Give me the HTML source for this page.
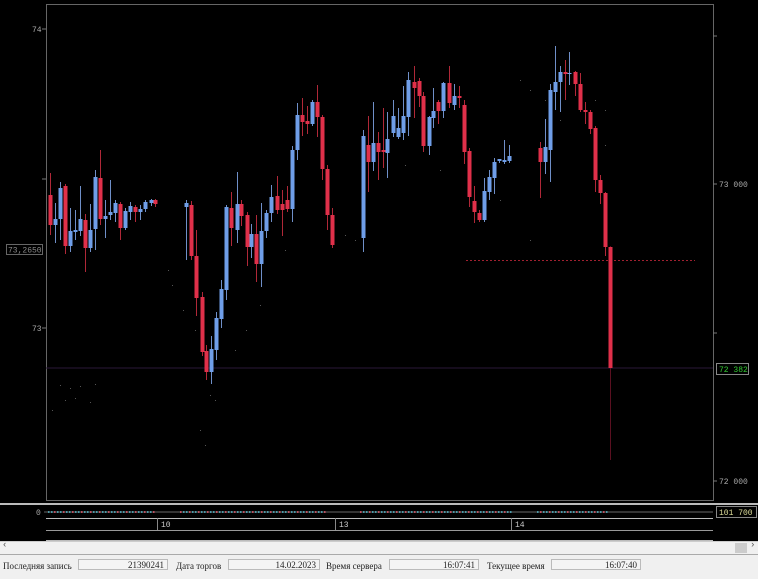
<!DOCTYPE html>
<html><head><meta charset="utf-8"><style>
html,body{margin:0;padding:0;width:758px;height:578px;overflow:hidden;background:#000;font-family:"Liberation Mono",monospace}
#c{position:absolute;left:0;top:0}
.sb{position:absolute;left:0;top:541px;width:758px;height:12px;background:#f0f0f0;border-top:1px solid #ccc}
.st{position:absolute;left:0;top:554px;width:758px;height:24px;background:#f0f0f0;border-top:1px solid #aaa;font-family:"Liberation Serif","DejaVu Serif",serif;font-size:9px;color:#222}
.st span{position:absolute;top:6px}
.st .f{position:absolute;top:4px;height:11px;border:1px solid #bbb;background:#f4f4f4;text-align:right;font-size:9px;line-height:11px;padding-right:3px;box-sizing:border-box}
</style></head><body>
<svg id="c" width="758" height="541" xmlns="http://www.w3.org/2000/svg" font-family="Liberation Mono, monospace" font-size="8">
<rect x="0" y="0" width="758" height="541" fill="#000"/>
<rect x="46.5" y="4.5" width="667" height="496" fill="none" stroke="#666" stroke-width="1"/>
<line x1="46" y1="368" x2="713" y2="368" stroke="#2a1838" stroke-width="1"/>
<line x1="466" y1="260.5" x2="695" y2="260.5" stroke="#a02030" stroke-width="1" stroke-dasharray="2,2"/>
<g stroke="#777"><line x1="42" y1="29" x2="46" y2="29"/><line x1="42" y1="179" x2="46" y2="179"/><line x1="42" y1="328" x2="46" y2="328"/>
<line x1="713" y1="36" x2="717" y2="36"/><line x1="713" y1="184" x2="717" y2="184"/><line x1="713" y1="333" x2="717" y2="333"/><line x1="713" y1="481" x2="717" y2="481"/></g>
<g fill="#aaa"><text x="32" y="32">74</text><text x="32" y="331">73</text><text x="719" y="187">73 000</text><text x="719" y="484">72 000</text></g>
<rect x="6.5" y="244.5" width="36" height="10" fill="#000" stroke="#666"/><text x="8" y="252.5" fill="#888">73,2650</text>
<rect x="716.5" y="363.5" width="32" height="11" fill="#000" stroke="#888"/><text x="719" y="372" fill="#3c3">72 382</text>
<g id="dots" fill="#555"></g>
<g id="cd"></g>
<rect x="0" y="503" width="758" height="2" fill="#bbb"/>
<line x1="44" y1="512" x2="713" y2="512" stroke="#666"/>
<text x="36" y="515" fill="#aaa">0</text>
<g id="vd"></g>
<rect x="716.5" y="506.5" width="40" height="11" fill="#000" stroke="#888"/><text x="719" y="515" fill="#dd9">101 700</text>
<line x1="46" y1="518.5" x2="713" y2="518.5" stroke="#bbb"/>
<line x1="46" y1="530.5" x2="713" y2="530.5" stroke="#999"/>
<line x1="46" y1="540.5" x2="713" y2="540.5" stroke="#bbb"/>
<g stroke="#888"><line x1="157.5" y1="518" x2="157.5" y2="530"/><line x1="335.5" y1="518" x2="335.5" y2="530"/><line x1="511.5" y1="518" x2="511.5" y2="530"/></g>
<g fill="#ccc"><text x="161" y="527">10</text><text x="339" y="527">13</text><text x="515" y="527">14</text></g>
</svg>
<div class="sb"><span style="position:absolute;left:2px;top:-2px;font-size:9px;color:#555">‹</span><div style="position:absolute;left:735px;top:1px;width:12px;height:10px;background:#ccc"></div><span style="position:absolute;left:750px;top:-2px;font-size:9px;color:#555">›</span></div>
<div class="st">
<span style="left:3px">Последняя запись</span><div class="f" style="left:78px;width:90px">21390241</div>
<span style="left:176px">Дата торгов</span><div class="f" style="left:228px;width:92px">14.02.2023</div>
<span style="left:326px">Время сервера</span><div class="f" style="left:389px;width:90px">16:07:41</div>
<span style="left:487px">Текущее время</span><div class="f" style="left:551px;width:90px">16:07:40</div>
</div>
<script>
var B='#6f9ee8',R='#e0304a';
var d=[[50,195,225,R,173,235],[55,219,225,B,203,243],[60,188,219,B,182,240],[65,186,246,R,184,254],[70,231,246,B,208,252],[75,230,232,B,210,240],[80,219,231,B,186,236],[85,220,248,R,214,272],[90,230,248,B,204,252],[95,177,229,B,170,250],[100,178,219,R,150,225],[105,216,219,B,200,238],[110,212,215,B,180,220],[115,203,213,B,200,222],[120,204,228,R,202,240],[125,211,228,B,208,230],[130,206,212,B,202,220],[135,207,212,R,205,222],[140,209,212,B,205,220],[145,202,209,B,200,212],[151,200,203,B,199,206],[155,200,204,R,199,207],
[186,203,207,B,200,260],[191,205,256,R,201,260],[196,256,298,R,230,316],[202,297,352,R,292,356],[206,351,372,R,345,380],[211,349,372,B,336,384],[216,318,350,B,312,360],[221,289,319,B,280,328],[226,207,290,B,205,300],[231,208,228,R,192,246],[237,204,230,B,172,243],[241,204,216,R,200,226],[247,215,247,R,212,266],[251,234,247,B,224,258],[256,234,264,R,215,282],[261,231,264,B,203,287],[266,213,231,B,210,238],[271,197,213,B,185,222],[277,196,210,R,176,214],[282,204,210,R,190,236],[287,200,209,R,186,212],[292,150,209,B,146,222],[297,115,150,B,103,160],[302,115,122,R,98,136],[307,121,124,R,106,134],[312,102,124,B,100,126],[317,102,117,R,85,137],[322,117,169,R,115,180],[327,169,215,R,165,230],[332,215,245,R,208,248],
[363,136,238,B,130,252],[368,145,162,R,116,192],[373,143,162,B,102,171],[378,143,152,R,132,180],[383,150,152,R,108,168],[387,139,153,B,112,178],[393,116,133,B,100,137],[398,128,137,B,108,139],[403,116,133,B,86,140],[408,80,117,B,72,136],[414,82,88,R,66,118],[419,81,96,R,78,107],[423,96,146,R,92,152],[429,117,146,B,116,155],[433,111,118,B,88,128],[438,102,111,R,100,124],[443,83,111,B,82,118],[449,83,103,R,66,108],[454,96,105,B,84,110],[459,96,98,R,86,108],[464,105,152,R,100,164],[469,151,197,R,148,207],[474,201,212,R,186,223],[479,213,220,R,210,222],[484,191,220,B,178,222],[489,177,192,B,170,200],[494,162,178,B,158,194],[499,159,161,B,160,163],[504,160,162,B,140,164],[509,156,161,B,145,163],
[540,148,162,R,142,198],[545,147,162,B,119,174],[550,90,150,B,84,182],[555,82,92,B,46,110],[560,72,82,B,66,112],[565,72,74,R,60,100],[569,73,74,B,52,85],[575,72,84,R,71,96],[580,84,110,R,73,112],[585,110,112,R,102,124],[590,112,129,R,110,134],[595,128,180,R,126,192],[600,180,193,R,175,204],[605,193,247,R,192,256],[610,247,368,R,246,460]];
var s='';d.forEach(function(c){var wc=c[3]==B?'#6f8fc8':'#b02838';if(c[0]==610)wc='#5a1020';s+='<line x1="'+(c[0]+.5)+'" y1="'+c[4]+'" x2="'+(c[0]+.5)+'" y2="'+c[5]+'" stroke="'+wc+'" stroke-width="1"/>';s+='<rect x="'+(c[0]-1.5)+'" y="'+c[1]+'" width="4" height="'+Math.max(1,c[2]-c[1])+'" fill="'+c[3]+'"/>';});
document.getElementById('cd').innerHTML=s;
var pts=[[60,385],[70,388],[80,386],[95,384],[65,400],[75,398],[52,410],[90,402],[168,270],[200,430],[205,445],[210,395],[215,400],[235,350],[246,330],[260,305],[285,250],[345,235],[355,240],[405,165],[440,170],[520,80],[530,90],[545,100],[560,120],[595,100],[605,110],[605,145],[500,200],[530,240],[172,285],[183,310],[195,330]];
var p='';pts.forEach(function(q){p+='<rect x="'+q[0]+'" y="'+q[1]+'" width="1" height="1"/>';});document.getElementById('dots').innerHTML=p;
var v='';for(var x=48;x<608;x+=3){if((x>155&&x<180)||(x>325&&x<358)||(x>510&&x<535))continue;v+='<rect x="'+x+'" y="511" width="1.5" height="2" fill="'+((x/3|0)%3==0?'#c05060':'#4a9aa8')+'"/>';}
document.getElementById('vd').innerHTML=v;
</script>
</body></html>
